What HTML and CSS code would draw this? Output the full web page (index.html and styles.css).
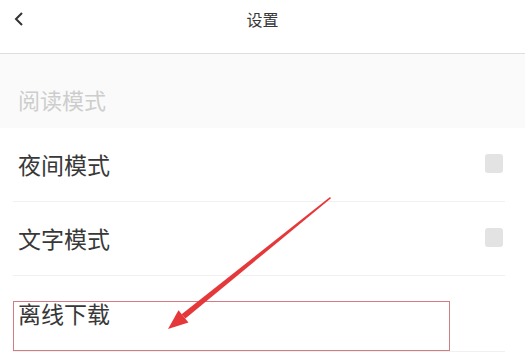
FILE: index.html
```html
<!DOCTYPE html>
<html>
<head>
    <meta charset="utf-8">
    <link rel="stylesheet" href="styles.css">
</head>
<body>
    <div class="header">
        <span class="back">
            <svg width="12" height="14" viewBox="0 0 12 14"><path d="M9 1 L3 7 L9 13" fill="none" stroke="#333" stroke-width="2"/></svg>
        </span>
        <span class="title">设置</span>
    </div>

    <div class="section">阅读模式</div>

    <div class="list">
        <div class="row">
            <span class="label">夜间模式</span>
            <span class="check"></span>
        </div>
        <div class="row">
            <span class="label">文字模式</span>
            <span class="check"></span>
        </div>
        <div class="row">
            <span class="label">离线下载</span>
        </div>
    </div>

    <!-- annotation -->
    <div class="mark"></div>
    <svg class="arrow" width="525" height="363" viewBox="0 0 525 363">
        <polygon points="330,197 331,198.2 185.4,318.6 181.6,314.2" fill="#e5383b"/>
        <polygon points="168,329 178.5,310.2 188.5,322.6" fill="#e5383b"/>
    </svg>
</body>
</html>
```

FILE: styles.css
```css
body {
    margin: 0;
    background: #fff;
    font-family: "Noto Sans CJK SC", "Noto Sans", sans-serif;
    color: #383838;
    width: 525px;
    height: 363px;
    overflow: hidden;
    position: relative;
}

.header {
    height: 53px;
    border-bottom: 1px solid #dedede;
    display: flex;
    align-items: center;
    justify-content: center;
    position: relative;
}

.back {
    position: absolute;
    left: 13px;
    top: 12px;
    line-height: 0;
}

.title {
    font-size: 16px;
    margin-top: -16px;
}

.section {
    height: 74px;
    background: #fafafa;
    color: #cdcdcd;
    font-size: 22px;
    padding-left: 18px;
    box-sizing: border-box;
    padding-top: 30px;
    line-height: 30px;
}

.list {
    margin: 0 20px 0 13px;
}

.row {
    height: 73px;
    border-bottom: 1px solid #f0f0f0;
    display: flex;
    align-items: center;
    justify-content: space-between;
    padding: 0 2px 0 5px;
}

.row:last-child {
    height: 75px;
}

.label {
    font-size: 23px;
    margin-top: -2px;
}

.check {
    width: 18px;
    height: 19px;
    border-radius: 3px;
    background: #e3e3e3;
    margin-top: -2px;
}

.mark {
    position: absolute;
    left: 13px;
    top: 301px;
    width: 435px;
    height: 48px;
    border: 1px solid #cf7c82;
}

.arrow {
    position: absolute;
    left: 0;
    top: 0;
}
```
